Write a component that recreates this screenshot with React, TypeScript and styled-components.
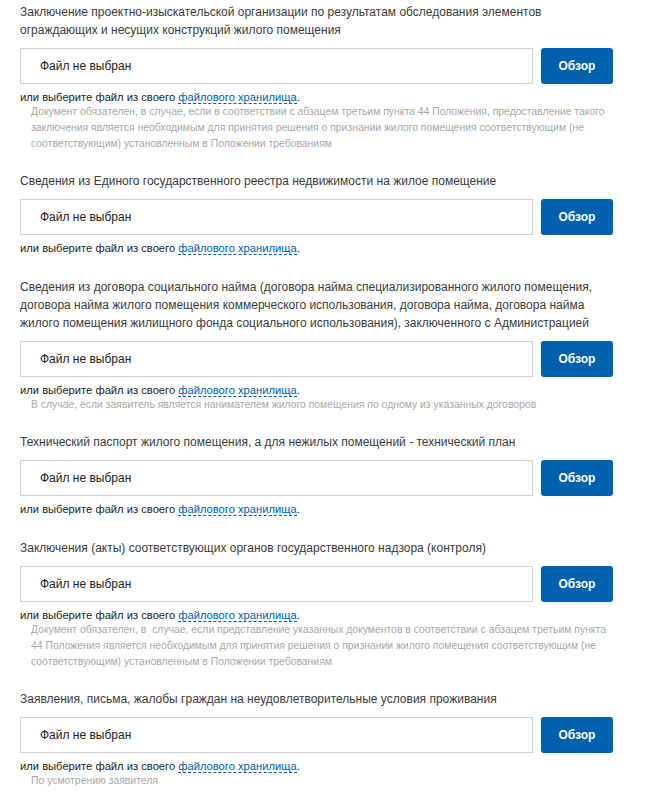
import React from "react";
import styled, { createGlobalStyle } from "styled-components";

interface IDocField {
  title: string;
  note?: string;
}

const fields: IDocField[] = [
  {
    title:
      "Заключение проектно-изыскательской организации по результатам обследования элементов ограждающих и несущих конструкций жилого помещения",
    note:
      "Документ обязателен, в случае, если в соответствии с абзацем третьим пункта 44 Положения, предоставление такого заключения является необходимым для принятия решения о признании жилого помещения соответствующим (не соответствующим) установленным в Положении требованиям"
  },
  {
    title: "Сведения из Единого государственного реестра недвижимости на жилое помещение"
  },
  {
    title:
      "Сведения из договора социального найма (договора найма специализированного жилого помещения, договора найма жилого помещения коммерческого использования, договора найма, договора найма жилого помещения жилищного фонда социального использования), заключенного с Администрацией",
    note: "В случае, если заявитель является нанимателем жилого помещения по одному из указанных договоров"
  },
  {
    title: "Технический паспорт жилого помещения, а для нежилых помещений - технический план"
  },
  {
    title: "Заключения (акты) соответствующих органов государственного надзора (контроля)",
    note:
      "Документ обязателен, в\u00a0 случае, если представление указанных документов в соответствии с абзацем третьим пункта 44 Положения является необходимым для принятия решения о признании жилого помещения соответствующим (не соответствующим) установленным в Положении требованиям"
  },
  {
    title: "Заявления, письма, жалобы граждан на неудовлетворительные условия проживания",
    note: "По усмотрению заявителя"
  }
];

const GlobalStyle = createGlobalStyle`
  body {
    margin: 0;
    background: #ffffff;
    font-family: "Liberation Sans", Arial, sans-serif;
  }
`;

const Page = styled.div`
  width: 593px;
  padding: 3px 0 0 20px;
`;

const Field = styled.div<{ $hasNote: boolean }>`
  margin-bottom: ${(p) => (p.$hasNote ? "20px" : "23px")};
`;

const Title = styled.div`
  font-size: 12px;
  line-height: 18px;
  color: #3b3b3b;
`;

const UploadRow = styled.div`
  display: flex;
  gap: 8px;
  margin-top: 9px;
`;

const FileBox = styled.div`
  flex: 1;
  height: 36px;
  box-sizing: border-box;
  border: 1px solid #d0d0d0;
  display: flex;
  align-items: center;
  padding-left: 19px;
  font-size: 12px;
  color: #222222;
`;

const BrowseButton = styled.button`
  width: 72px;
  height: 36px;
  border: none;
  border-radius: 3px;
  background: #0061ad;
  color: #ffffff;
  font-family: "Liberation Sans", Arial, sans-serif;
  font-size: 12px;
  font-weight: bold;
  cursor: pointer;
`;

const Helper = styled.div`
  margin-top: 6px;
  font-size: 11.2px;
  line-height: 14px;
  color: #222222;
`;

const StorageLink = styled.a`
  color: #0060ab;
  text-decoration: none;
  border-bottom: 1px dashed #0060ab;
`;

const Note = styled.div`
  padding: 0 0 0 11px;
  font-size: 10.4px;
  line-height: 16px;
  color: #a8a8a8;
`;

export default function App() {
  return (
    <Page>
      <GlobalStyle />
      {fields.map((field, i) => (
        <Field key={i} $hasNote={!!field.note}>
          <Title>{field.title}</Title>
          <UploadRow>
            <FileBox>Файл не выбран</FileBox>
            <BrowseButton>Обзор</BrowseButton>
          </UploadRow>
          <Helper>
            или выберите файл из своего <StorageLink href="#">файлового хранилища</StorageLink>.
          </Helper>
          {field.note && <Note>{field.note}</Note>}
        </Field>
      ))}
    </Page>
  );
}
